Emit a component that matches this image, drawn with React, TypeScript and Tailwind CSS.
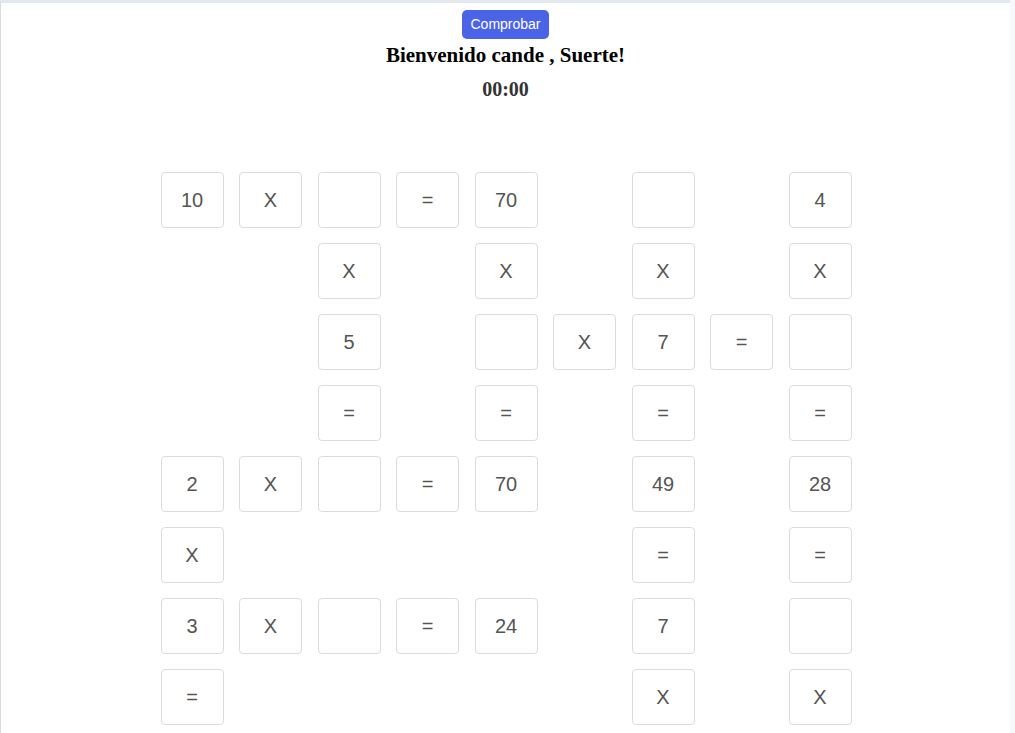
import React from "react";

type Cell = string | null; // null = nothing, "" = empty box

const rows: Cell[][] = [
  ["10", "X", "", "=", "70", null, "", null, "4"],
  [null, null, "X", null, "X", null, "X", null, "X"],
  [null, null, "5", null, "", "X", "7", "=", ""],
  [null, null, "=", null, "=", null, "=", null, "="],
  ["2", "X", "", "=", "70", null, "49", null, "28"],
  ["X", null, null, null, null, null, "=", null, "="],
  ["3", "X", "", "=", "24", null, "7", null, ""],
  ["=", null, null, null, null, null, "X", null, "X"],
];

export default function App() {
  return (
    <div className="min-h-screen bg-[#f7f8fd]" style={{ fontFamily: '"Liberation Serif", serif' }}>
      <div className="w-[1010px] min-h-[733px] bg-white border-t-[3px] border-l border-t-[#e3e8ee] border-l-[#d9dde3]">
        <div className="flex flex-col items-center pt-[7px]">
          <button
            className="h-[29px] px-[8.5px] rounded-[5px] bg-[#4a63e7] text-white text-[14px]"
            style={{ fontFamily: '"Liberation Sans", Arial, sans-serif' }}
          >
            Comprobar
          </button>
          <h1 className="mt-[1px] text-[21px] font-bold leading-[30px] text-black">Bienvenido cande , Suerte!</h1>
          <div className="mt-[4px] text-[20px] font-bold leading-[30px] text-[#333]">00:00</div>
        </div>
        <div className="flex justify-center mt-[68px]">
          <div className="grid grid-cols-[repeat(9,63px)] auto-rows-[56px] gap-x-[15.5px] gap-y-[15px] pl-[1px]">
            {rows.flat().map((c, i) =>
              c === null ? (
                <div key={i} />
              ) : (
                <div
                  key={i}
                  className="flex items-center justify-center border border-[#dcdcdc] rounded-[4px] text-[20px] text-[#555]"
                  style={{ fontFamily: '"Liberation Sans", Arial, sans-serif' }}
                >
                  {c}
                </div>
              )
            )}
          </div>
        </div>
      </div>
    </div>
  );
}
